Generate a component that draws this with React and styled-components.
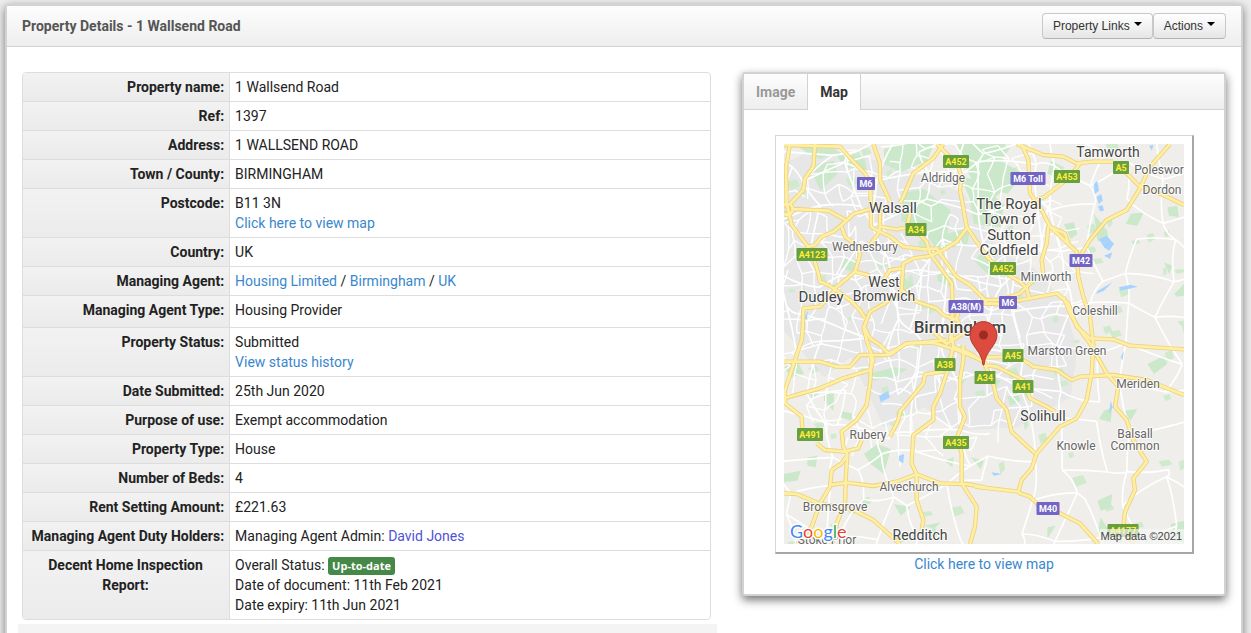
import React, { useState } from 'react';
import styled, { createGlobalStyle, css } from 'styled-components';

const GlobalStyle = createGlobalStyle`
  * {
    box-sizing: border-box;
  }
  html {
    scrollbar-width: none;
  }
  body {
    margin: 0;
    background: #eeeeee;
    color: #222;
    font-family: Roboto, "Liberation Sans", sans-serif;
    font-size: 14px;
    line-height: 20px;
  }
`;

const Panel = styled.main`
  margin: 4px 8px 0 5px;
  background: #fff;
  border: 2px solid #d2d2d2;
  border-radius: 4px;
  box-shadow: 0 3px 10px rgba(0, 0, 0, 0.5);
`;

const PanelHeader = styled.header`
  display: flex;
  align-items: center;
  justify-content: space-between;
  height: 41px;
  padding: 0 15px;
  border-bottom: 1px solid #d2d2d2;
  background: linear-gradient(#fdfdfd, #eeeeee);
`;

const Title = styled.h1`
  margin: 0;
  color: #555;
  font-size: 14px;
  font-weight: bold;
`;

const ButtonGroup = styled.div`
  display: flex;
`;

const Button = styled.button`
  display: flex;
  align-items: flex-start;
  gap: 4px;
  height: 26px;
  padding: 2px 10px;
  border: 1px solid #c8c8c8;
  border-bottom-color: #b3b3b3;
  border-radius: 4px;
  background: linear-gradient(#fff, #e6e6e6);
  color: #333;
  font-family: "Liberation Sans", Arial, sans-serif;
  font-size: 12px;
  line-height: 20px;
`;

const Caret = styled.span`
  margin-top: 6px;
  border-top: 4px solid #000;
  border-left: 4px solid transparent;
  border-right: 4px solid transparent;
`;

const Content = styled.div`
  display: grid;
  grid-template-columns: 689fr 484fr;
  align-items: start;
  gap: 31px;
  padding: 25px 15px;
`;

const Details = styled.table`
  width: 100%;
  border: 1px solid #ddd;
  border-radius: 4px;
  border-spacing: 0;
  overflow: hidden;

  tr + tr > * {
    border-top: 1px solid #ddd;
  }
`;

const Label = styled.th`
  width: 30%;
  padding: 4px 5px 4px 4px;
  background: linear-gradient(#f2f2f2, #ebebeb);
  font-weight: bold;
  text-align: ${(props) => (props.$center ? 'center' : 'right')};
  vertical-align: top;
  white-space: ${(props) => (props.$center ? 'normal' : 'nowrap')};
`;

const Value = styled.td`
  padding: 4px 5px ${(props) => (props.$tall ? 7 : 4)}px;
  border-left: 1px solid #ddd;
  vertical-align: top;
`;

const Link = styled.a`
  color: ${(props) => (props.$person ? '#4f52d9' : '#3a87cd')};
  text-decoration: none;
`;

const Badge = styled.span`
  display: inline-block;
  padding: 2px 4px;
  border-radius: 3px;
  background: #468847;
  color: #fff;
  font-family: "Open Sans", sans-serif;
  font-size: 11px;
  font-weight: bold;
  line-height: 14px;
`;

const NextSection = styled.div`
  height: 40px;
  margin: 4px -6px 0 -4px;
  background: #f4f4f4;
`;

const Widget = styled.section`
  border: 2px solid #d2d2d2;
  border-radius: 3px;
  background: #fff;
  box-shadow: 0 4px 10px rgba(0, 0, 0, 0.55);
`;

const TabBar = styled.div`
  display: flex;
  height: 36px;
  border-bottom: 1px solid #d2d2d2;
  background: linear-gradient(#fdfdfd, #eeeeee);
`;

const Tab = styled.button`
  height: 36px;
  padding: 0 12px;
  border: 0;
  border-right: 1px solid #d2d2d2;
  background: transparent;
  color: #999;
  font: bold 14px/36px Roboto, sans-serif;

  ${(props) =>
    props.$active &&
    css`
      background: #fff;
      color: #333;
    `}
`;

const TabBody = styled.div`
  display: flex;
  flex-direction: column;
  align-items: center;
  padding: 25px 0 20px;
`;

const MapFrame = styled.div`
  padding: 8px;
  border: solid;
  border-width: 1px 2px 2px 1px;
  border-color: #d6d6d6 #a6a6a6 #a6a6a6 #d6d6d6;
`;

const MapSvg = styled.svg`
  display: block;
  width: 400px;
  height: 400px;
  font-family: Roboto, sans-serif;
`;

const Place = styled.text`
  fill: ${(props) => (props.$big ? '#444' : '#666')};
  stroke: #fff;
  stroke-width: 2px;
  stroke-opacity: 0.8;
  paint-order: stroke;
  text-anchor: middle;
`;

// Road geometry is drawn on a 1200 x 1200 grid and scaled down to the map.
const mainRoads = [
  '18,0 6,68 8,178 23,243 68,303 88,338 103,388 108,413 133,423 153,436 198,468 228,498 243,523',
  '93,0 88,68 63,103 58,138 18,180',
  '23,195 133,200 188,230 208,210 256,196',
  '188,230 148,263 113,278 93,303 73,308',
  '173,248 183,278 223,308 228,333 213,383 153,433',
  '0,3 168,8 208,53 243,88 258,118 261,188 261,248 278,258 318,278 358,308 418,316 458,313 478,343 518,398 558,423 598,463 608,478 648,480',
  '268,0 288,58 288,108 318,173',
  '478,0 448,43 388,88 358,158 348,178',
  '458,0 518,58 533,98 528,138 548,248 578,293 610,338 648,378 708,413 728,433 736,463',
  '548,253 518,293 478,318 438,336 388,343 358,358 353,438 303,478 258,503 240,548 258,583 288,603 318,633 368,598 438,593 488,588',
  '288,248 338,256 368,250 378,210',
  '288,248 288,185',
  '403,268 428,293 438,328 503,418 506,478 503,558 498,588',
  '288,248 283,268 258,303',
  '353,438 398,473 458,493 478,513 518,528',
  '213,383 258,395',
  '353,373 318,378 298,408',
  '153,438 108,488 58,493 56,558 53,588 33,648 3,738 3,778 53,818 55,858',
  '588,478 648,480 738,463 818,448 853,478 878,548 918,583 988,586 1038,605 1200,616',
  '713,0 733,48 738,148 773,198 798,248 878,323 883,398 898,458 918,518 928,603 923,688 908,768 878,823 828,848 758,928 743,973 713,1008 703,1043 618,1033 573,1028',
  '698,0 778,33 838,38 878,58 928,53 988,53',
  '888,58 853,103 783,158 743,173',
  '888,338 918,288 968,228 1028,198 1068,133 1098,68 1158,0',
  '1008,68 1068,128 1138,153 1200,183',
  '793,248 788,298 773,348 778,388',
  '798,248 843,268 853,298',
  '743,413 708,448 648,468 588,468',
  '838,458 863,518 888,558 918,598 968,688 1003,728 993,788 1028,828 1048,888 1088,953 1048,1003 1053,1038 1023,1103 1018,1148 1048,1200',
  '0,653 108,653 158,668 198,668 228,633 308,633 368,598 448,596 518,618 598,650',
  '0,763 108,733 178,703 258,678 268,648 248,588 238,548',
  '258,633 263,648 258,718 248,783 218,828 173,863 178,908 190,933 186,988 183,1078 158,1138 143,1200',
  '98,898 123,918 183,923 223,913 233,888',
  '190,933 173,958 143,978 138,1028 108,1078 83,1148 40,1200',
  '138,1023 188,1016 268,1026 338,1013 398,991 468,1018 548,1020 603,1030',
  '0,1048 38,1050 103,1078 208,1098 268,1128 348,1200',
  '508,608 488,688 468,748 448,788 448,828 388,873 383,958 398,991 398,1068 418,1128 413,1158',
  '478,683 423,691 418,718 348,803 343,828 318,878',
  '538,603 538,648 528,708 528,788 543,818 520,878 533,928 533,1018 578,1088 573,1148 558,1200',
  '598,663 638,668 718,708 738,763 788,788 813,803',
  '598,650 628,720 638,763 668,798 683,863 753,928',
  '703,1046 738,1058 768,1088 828,1108 888,1138 943,1200',
  '568,563 598,590 608,640 688,638 718,648 748,668 818,678 863,708 888,698 988,693 1088,708 1200,753',
  '448,563 488,600 538,568 518,523 528,483',
  '498,538 508,608 558,628 608,660',
];

const parks = [
  '30,0 140,0 160,25 110,45 75,30',
  '150,20 240,40 250,80 180,70',
  '100,60 150,50 160,90 110,140 90,100',
  '300,15 350,0 450,0 430,50 350,85 300,60',
  '520,0 665,0 650,80 700,70 680,130 630,160 570,120 540,60',
  '530,100 600,110 650,180 600,200 560,170',
  '360,145 420,135 500,200 490,270 560,250 550,300 460,320 420,260 350,230',
  '555,150 660,180 650,250 570,240',
  '588,330 640,350 620,400 570,350',
  '350,395 390,420 370,460 345,430',
  '460,380 510,395 500,430 460,410',
  '180,340 220,350 215,390 170,370',
  '590,20 680,10 650,50 720,90 670,150 590,120',
  '800,50 840,70 830,100 790,90',
  '1040,210 1080,205 1060,245 1025,240',
  '1150,190 1180,185 1185,220 1155,215',
  '840,240 870,235 880,270 860,285',
  '930,210 970,260 975,300 940,290',
  '1140,355 1165,365 1155,390',
  '1200,420 1170,450 1180,458 1200,455',
  '0,200 20,215 5,240',
  '250,690 330,670 370,675 330,700 260,710',
  '120,745 150,740 148,800 120,770',
  '0,670 40,650 60,690 20,700',
  '170,800 210,810 200,830 170,820',
  '240,930 280,900 320,915 300,990 260,960',
  '0,990 50,980 40,1010 0,1015',
  '70,940 100,935 95,970 70,965',
  '480,950 510,940 505,970',
  '420,1145 470,1135 450,1155',
  '330,1080 380,1090 350,1115',
  '960,800 985,790 980,835 945,825',
  '940,1070 985,1050 980,1090 950,1100',
  '670,760 700,745 710,770 680,785',
  '1090,660 1140,635 1150,660 1110,690',
  '1020,800 1060,795 1040,830',
  '790,1150 815,1145 790,1185',
  '940,1170 950,1120 975,1160',
  '510,690 550,700 530,730',
  '620,700 650,710 630,740',
  '1160,1140 1200,1130 1200,1195 1170,1190',
  '560,940 600,950 590,975',
];

const lakes = [
  '930,120 940,110 945,140 932,150',
  '938,158 952,150 956,170 944,180',
  '942,186 956,184 960,200 948,202',
  '945,285 968,275 990,300 975,320 960,310',
  '960,335 985,325 978,345',
  '1005,430 1040,422 1062,428 1010,440',
  '942,440 985,415 960,440 935,450',
  '285,755 312,742 318,760 290,775',
  '345,935 360,930 358,958 345,950',
  '622,985 655,990 630,995',
  '60,520 72,500 68,528',
  '580,300 600,310 590,320',
  '1010,640 1020,620 1016,648',
  '980,770 986,790 975,810',
  '1095,5 1108,2 1104,20',
];

// Repeatable pseudo random values, so that the street mesh never changes.
const makeRandom = (seed) => () => {
  seed = (seed * 16807) % 2147483647;
  return seed / 2147483647;
};

const buildStreets = (size, seed, keep, inside) => {
  const random = makeRandom(seed);
  const count = Math.ceil(1200 / size) + 1;
  const nodes = [];
  for (let row = 0; row <= count; row++) {
    nodes.push([]);
    for (let col = 0; col <= count; col++) {
      nodes[row].push([
        Math.round((col + random() * 0.9 - 0.5) * size),
        Math.round((row + random() * 0.9 - 0.5) * size),
      ]);
    }
  }
  let d = '';
  const join = (a, b) => {
    const bendX = Math.round((a[0] + b[0]) / 2 + (random() - 0.5) * size * 0.3);
    const bendY = Math.round((a[1] + b[1]) / 2 + (random() - 0.5) * size * 0.3);
    if (random() < keep && inside(a[0], a[1])) {
      d += `M${a[0]} ${a[1]}Q${bendX} ${bendY} ${b[0]} ${b[1]}`;
    }
  };
  for (let row = 0; row < count; row++) {
    for (let col = 0; col < count; col++) {
      join(nodes[row][col], nodes[row][col + 1]);
      join(nodes[row][col], nodes[row + 1][col]);
    }
  }
  return d;
};

const buildPatches = (total, seed) => {
  const random = makeRandom(seed);
  let d = '';
  for (let i = 0; i < total; i++) {
    const x = Math.round(random() * 1200);
    const y = Math.round(random() * 1200);
    const w = Math.round(10 + random() * 22);
    const h = Math.round(8 + random() * 18);
    d += `M${x} ${y}l${w} ${-Math.round(h / 3)}l${Math.round(w / 3)} ${h}l${-w} ${Math.round(h / 2)}Z`;
  }
  return d;
};

const inCity = (x, y) => ((x - 400) / 480) ** 2 + ((y - 430) / 500) ** 2 < 1;
const cityStreets = buildStreets(44, 77, 0.72, inCity);
const countryRoads = buildStreets(105, 401, 0.75, () => true);
const smallParks = buildPatches(90, 913);

const places = [
  { x: 324, y: 13, size: 14, text: 'Tamworth', big: true },
  { x: 375, y: 30, size: 12, text: 'Poleswor' },
  { x: 378, y: 50, size: 12, text: 'Dordon' },
  { x: 159, y: 38, size: 12, text: 'Aldridge' },
  { x: 109, y: 69, size: 15, text: 'Walsall', big: true },
  { x: 225, y: 65, size: 15, text: 'The Royal', big: true },
  { x: 225, y: 80, size: 15, text: 'Town of', big: true },
  { x: 225, y: 96, size: 15, text: 'Sutton', big: true },
  { x: 225, y: 111, size: 15, text: 'Coldfield', big: true },
  { x: 81, y: 107, size: 12, text: 'Wednesbury' },
  { x: 262, y: 137, size: 12, text: 'Minworth' },
  { x: 100, y: 143, size: 14, text: 'West', big: true },
  { x: 100, y: 157, size: 14, text: 'Bromwich', big: true },
  { x: 37, y: 158, size: 15, text: 'Dudley', big: true },
  { x: 311, y: 171, size: 12, text: 'Coleshill' },
  { x: 176, y: 189, size: 17, text: 'Birmingham', big: true, weight: 500 },
  { x: 283, y: 211, size: 12, text: 'Marston Green' },
  { x: 354, y: 244, size: 12, text: 'Meriden' },
  { x: 259, y: 277, size: 14, text: 'Solihull', big: true },
  { x: 351, y: 294, size: 12, text: 'Balsall' },
  { x: 351, y: 306, size: 12, text: 'Common' },
  { x: 292, y: 306, size: 12, text: 'Knowle' },
  { x: 84, y: 295, size: 12, text: 'Rubery' },
  { x: 125, y: 347, size: 12, text: 'Alvechurch' },
  { x: 51, y: 367, size: 12, text: 'Bromsgrove' },
  { x: 43, y: 400, size: 12, text: 'Stoke Prior' },
  { x: 136, y: 396, size: 14, text: 'Redditch', big: true },
];

const shields = [
  { x: 172, y: 18, width: 26, text: 'A452' },
  { x: 82, y: 40, width: 18, text: 'M6', motorway: true },
  { x: 244, y: 35, width: 35, text: 'M6 Toll', motorway: true },
  { x: 283, y: 33, width: 26, text: 'A453' },
  { x: 337, y: 24, width: 16, text: 'A5' },
  { x: 132, y: 86, width: 21, text: 'A34' },
  { x: 28, y: 111, width: 31, text: 'A4123' },
  { x: 297, y: 117, width: 23, text: 'M42', motorway: true },
  { x: 219, y: 125, width: 26, text: 'A452' },
  { x: 182, y: 163, width: 35, text: 'A38(M)', motorway: true },
  { x: 224, y: 159, width: 18, text: 'M6', motorway: true },
  { x: 229, y: 212, width: 21, text: 'A45' },
  { x: 161, y: 221, width: 21, text: 'A38' },
  { x: 201, y: 234, width: 21, text: 'A34' },
  { x: 239, y: 243, width: 21, text: 'A41' },
  { x: 26, y: 291, width: 26, text: 'A491' },
  { x: 172, y: 299, width: 26, text: 'A435' },
  { x: 264, y: 365, width: 23, text: 'M40', motorway: true },
  { x: 339, y: 387, width: 31, text: 'A4177' },
];

const Shield = ({ x, y, width, text, motorway }) => (
  <g>
    <rect
      x={x - width / 2}
      y={y - 7}
      width={width}
      height="13"
      rx="1"
      fill={motorway ? '#7365c5' : '#689f3f'}
    />
    <text
      x={x}
      y={y + 3}
      textAnchor="middle"
      fontSize="9"
      fontWeight="bold"
      fill={motorway ? '#fff' : '#fdee3c'}
    >
      {text}
    </text>
  </g>
);

const googleLetters = [
  ['G', '#4285f4'],
  ['o', '#ea4335'],
  ['o', '#fbbc05'],
  ['g', '#4285f4'],
  ['l', '#34a853'],
  ['e', '#ea4335'],
];

const AreaMap = () => (
  <MapSvg viewBox="0 0 400 400" role="img" aria-label="Map of Birmingham">
    <rect width="400" height="400" fill="#efeeea" />
    <g transform="scale(0.33333)" fill="none" strokeLinejoin="round">
      <path
        d="M0 60L120 0L400 90L540 150L650 330L740 360L840 470L880 620L860 760L700 850L520 860L420 790L300 850L200 640L120 700L0 560Z"
        fill="#e7e7e7"
      />
      <path d={smallParks} fill="#cfeacd" />
      {parks.map((points) => (
        <polygon key={points} points={points} fill="#cbe9ca" />
      ))}
      <path d={cityStreets} stroke="#fff" strokeWidth="4" />
      <path d={countryRoads} stroke="#fff" strokeWidth="5" />
      {lakes.map((points) => (
        <polygon key={points} points={points} fill="#a9d3ff" />
      ))}
      <g stroke="#efd07a" strokeWidth="13">
        <circle cx="10" cy="196" r="16" />
        {mainRoads.map((points) => (
          <polyline key={points} points={points} />
        ))}
      </g>
      <g stroke="#fdefa4" strokeWidth="8">
        <circle cx="10" cy="196" r="16" />
        {mainRoads.map((points) => (
          <polyline key={points} points={points} />
        ))}
      </g>
    </g>
    {places.map((place) => (
      <Place
        key={place.text}
        x={place.x}
        y={place.y}
        fontSize={place.size}
        fontWeight={place.weight}
        $big={place.big}
      >
        {place.text}
      </Place>
    ))}
    {shields.map((shield) => (
      <Shield key={`${shield.text}-${shield.x}`} {...shield} />
    ))}
    <path
      d="M199 221C198 207 186 202 186 191A13.500 13.500 0 0 1 213 191C213 202 201 207 200 221Z"
      fill="#dd4b3e"
      stroke="#b43a30"
      strokeWidth="1"
    />
    <circle cx="199.500" cy="191" r="4.500" fill="#9c2c22" />
    <rect x="316" y="385" width="84" height="15" fill="#f5f5f5" fillOpacity="0.7" />
    <text
      x="398"
      y="396"
      textAnchor="end"
      fontSize="11"
      fontFamily="Liberation Sans, Arial, sans-serif"
      fill="#444"
    >
      Map data ©2021
    </text>
    <text
      x="6"
      y="394"
      fontSize="18"
      fontFamily="Lato, sans-serif"
      stroke="#fff"
      strokeWidth="3"
      paintOrder="stroke"
    >
      {googleLetters.map(([letter, color], index) => (
        <tspan key={index} fill={color}>
          {letter}
        </tspan>
      ))}
    </text>
  </MapSvg>
);

const rows = [
  { label: 'Property name:', value: '1 Wallsend Road' },
  { label: 'Ref:', value: '1397' },
  { label: 'Address:', value: '1 WALLSEND ROAD' },
  { label: 'Town / County:', value: 'BIRMINGHAM' },
  {
    label: 'Postcode:',
    value: (
      <>
        B11 3N
        <br />
        <Link href="#map">Click here to view map</Link>
      </>
    ),
  },
  { label: 'Country:', value: 'UK' },
  {
    label: 'Managing Agent:',
    value: (
      <>
        <Link href="#agent">Housing Limited</Link> / <Link href="#city">Birmingham</Link> /{' '}
        <Link href="#country">UK</Link>
      </>
    ),
  },
  { label: 'Managing Agent Type:', value: 'Housing Provider', tall: true },
  {
    label: 'Property Status:',
    value: (
      <>
        Submitted
        <br />
        <Link href="#history">View status history</Link>
      </>
    ),
  },
  { label: 'Date Submitted:', value: '25th Jun 2020' },
  { label: 'Purpose of use:', value: 'Exempt accommodation' },
  { label: 'Property Type:', value: 'House' },
  { label: 'Number of Beds:', value: '4' },
  { label: 'Rent Setting Amount:', value: '£221.63' },
  {
    label: 'Managing Agent Duty Holders:',
    value: (
      <>
        Managing Agent Admin:{' '}
        <Link href="#david-jones" $person>
          David Jones
        </Link>
      </>
    ),
  },
  {
    label: 'Decent Home Inspection Report:',
    center: true,
    value: (
      <>
        Overall Status: <Badge>Up-to-date</Badge>
        <br />
        Date of document: 11th Feb 2021
        <br />
        Date expiry: 11th Jun 2021
      </>
    ),
  },
];

const App = () => {
  const [tab, setTab] = useState('Map');

  return (
    <>
      <GlobalStyle />
      <Panel>
        <PanelHeader>
          <Title>Property Details - 1 Wallsend Road</Title>
          <ButtonGroup>
            <Button type="button">
              Property Links
              <Caret />
            </Button>
            <Button type="button">
              Actions
              <Caret />
            </Button>
          </ButtonGroup>
        </PanelHeader>
        <Content>
          <div>
            <Details>
              <tbody>
                {rows.map((row) => (
                  <tr key={row.label}>
                    <Label scope="row" $center={row.center}>
                      {row.label}
                    </Label>
                    <Value $tall={row.tall}>{row.value}</Value>
                  </tr>
                ))}
              </tbody>
            </Details>
            <NextSection />
          </div>
          <Widget>
            <TabBar role="tablist">
              {['Image', 'Map'].map((name) => (
                <Tab
                  key={name}
                  type="button"
                  role="tab"
                  aria-selected={tab === name}
                  $active={tab === name}
                  onClick={() => setTab(name)}
                >
                  {name}
                </Tab>
              ))}
            </TabBar>
            <TabBody role="tabpanel">
              {tab === 'Map' && (
                <>
                  <MapFrame>
                    <AreaMap />
                  </MapFrame>
                  <Link href="#map">Click here to view map</Link>
                </>
              )}
            </TabBody>
          </Widget>
        </Content>
      </Panel>
    </>
  );
};

export default App;
